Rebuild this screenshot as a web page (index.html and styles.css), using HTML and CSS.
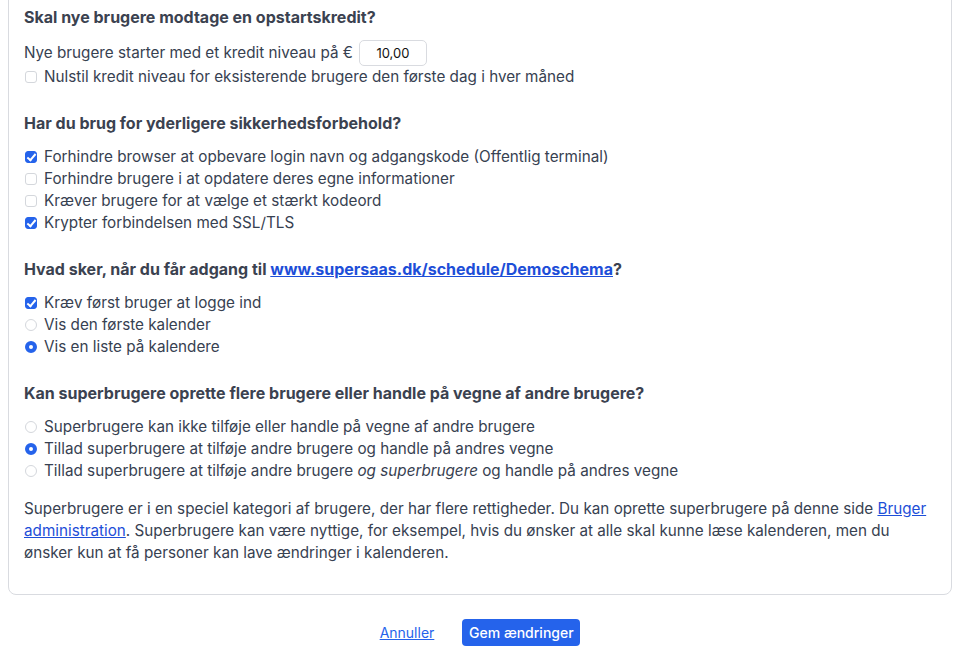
FILE: index.html
```html
<!DOCTYPE html>
<html lang="da">
<head>
<meta charset="utf-8">
<title>Indstillinger</title>
<link rel="stylesheet" href="styles.css">
</head>
<body>
<div class="card">
  <section class="group">
    <h3 class="q">Skal nye brugere modtage en opstartskredit?</h3>
    <div class="input-row">Nye brugere starter med et kredit niveau på €<input class="num" type="text" value="10,00"></div>
    <label class="opt"><span class="cb"></span>Nulstil kredit niveau for eksisterende brugere den første dag i hver måned</label>
  </section>

  <section class="group">
    <h3 class="q">Har du brug for yderligere sikkerhedsforbehold?</h3>
    <label class="opt"><span class="cb on"></span>Forhindre browser at opbevare login navn og adgangskode (Offentlig terminal)</label>
    <label class="opt"><span class="cb"></span>Forhindre brugere i at opdatere deres egne informationer</label>
    <label class="opt"><span class="cb"></span>Kræver brugere for at vælge et stærkt kodeord</label>
    <label class="opt"><span class="cb on"></span>Krypter forbindelsen med SSL/TLS</label>
  </section>

  <section class="group">
    <h3 class="q">Hvad sker, når du får adgang til <a href="#">www.supersaas.dk/schedule/Demoschema</a>?</h3>
    <label class="opt"><span class="cb on"></span>Kræv først bruger at logge ind</label>
    <label class="opt"><span class="rb"></span>Vis den første kalender</label>
    <label class="opt"><span class="rb on"></span>Vis en liste på kalendere</label>
  </section>

  <section class="group">
    <h3 class="q">Kan superbrugere oprette flere brugere eller handle på vegne af andre brugere?</h3>
    <label class="opt"><span class="rb"></span>Superbrugere kan ikke tilføje eller handle på vegne af andre brugere</label>
    <label class="opt"><span class="rb on"></span>Tillad superbrugere at tilføje andre brugere og handle på andres vegne</label>
    <label class="opt"><span class="rb"></span>Tillad superbrugere at tilføje andre brugere&nbsp;<em>og superbrugere</em>&nbsp;og handle på andres vegne</label>
    <p class="note">Superbrugere er i en speciel kategori af brugere, der har flere rettigheder. Du kan oprette superbrugere på denne side <a href="#">Bruger administration</a>. Superbrugere kan være nyttige, for eksempel, hvis du ønsker at alle skal kunne læse kalenderen, men du ønsker kun at få personer kan lave ændringer i kalenderen.</p>
  </section>
</div>
<div class="actions">
  <a href="#" class="cancel">Annuller</a>
  <button class="save" type="button">Gem ændringer</button>
</div>
</body>
</html>
```

FILE: styles.css
```css
html, body {
  margin: 0;
  padding: 0;
  background: #fff;
}
body {
  padding: 0 8px;
  font-family: Inter, "Noto Sans", "Liberation Sans", sans-serif;
  font-size: 15.25px;
  color: #374151;
  overflow: hidden;
}
.card {
  margin-top: -19px;
  border: 1px solid #d9dbe0;
  border-radius: 8px;
  padding: 23px 15px 30px 15px;
}
.group {
  margin-bottom: 23px;
}
.group:last-child {
  margin-bottom: 0;
}
.q {
  margin: 0 0 11px 0;
  font-size: 16px;
  line-height: 24px;
  font-weight: 700;
  color: #3b4250;
}
.q a {
  color: #1d4ed8;
  text-decoration: underline;
}
.input-row {
  display: flex;
  align-items: center;
  height: 26px;
  line-height: 22px;
}
.num {
  box-sizing: border-box;
  width: 68px;
  height: 26px;
  margin-left: 6px;
  border: 1px solid #d9dbe0;
  border-radius: 5px;
  font-family: inherit;
  font-size: 13px;
  color: #111;
  text-align: center;
  padding: 0;
}
.opt {
  display: flex;
  align-items: center;
  line-height: 22px;
  white-space: nowrap;
}
.opt em {
  font-style: italic;
}
.cb, .rb {
  box-sizing: border-box;
  flex: none;
  width: 12px;
  height: 12px;
  margin: 0 7px 0 1px;
  border: 1px solid #d4d7dc;
  background: #fff;
  position: relative;
}
.cb {
  border-radius: 3px;
}
.rb {
  border-radius: 50%;
}
.cb.on {
  background: #2563eb;
  border-color: #2563eb;
}
.cb.on::after {
  content: "";
  position: absolute;
  left: 3px;
  top: 0px;
  width: 3px;
  height: 7px;
  border: solid #fff;
  border-width: 0 2px 2px 0;
  transform: rotate(40deg);
}
.rb.on {
  border: 4px solid #2563eb;
  background: #fff;
}
.note {
  margin: 16px 0 0 0;
  line-height: 22px;
}
.note a {
  color: #1d4ed8;
  text-decoration: underline;
}
.actions {
  display: flex;
  justify-content: center;
  align-items: center;
  gap: 28px;
  margin-top: 24px;
}
.cancel {
  color: #2563eb;
  font-size: 14px;
  text-decoration: underline;
}
.save {
  background: #2563eb;
  color: #fff;
  border: none;
  border-radius: 4px;
  height: 27px;
  width: 118px;
  font-family: inherit;
  font-size: 14px;
  font-weight: 500;
  padding: 0;
}
```
